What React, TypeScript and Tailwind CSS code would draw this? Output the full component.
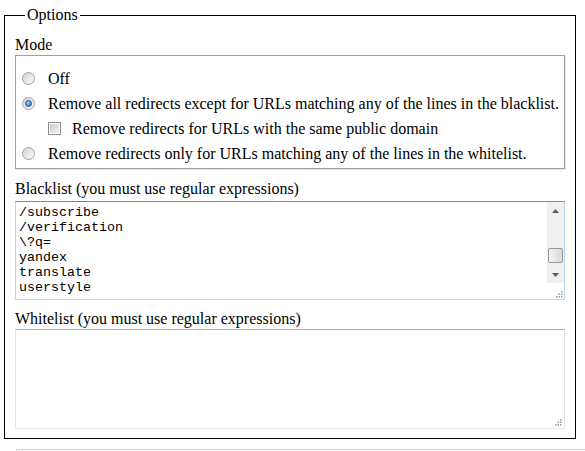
import React from 'react'

function Radio({ checked }: { checked?: boolean }) {
  return (
    <span className="flex h-[13px] w-[13px] shrink-0 items-center justify-center rounded-full border border-[#a2a2a2] bg-gradient-to-br from-[#d4d4d4] to-[#fafafa]">
      {checked && (
        <span className="h-[7px] w-[7px] rounded-full border border-[#1c4f8a] bg-[radial-gradient(circle_at_35%_35%,#8fd0f8,#2a6db5)]" />
      )}
    </span>
  )
}

function Checkbox() {
  return (
    <span className="flex h-[13px] w-[13px] shrink-0 items-center justify-center border border-[#8e8f8f] bg-white">
      <span className="h-[9px] w-[9px] bg-gradient-to-br from-[#cbcbcb] to-[#f4f4f4]" />
    </span>
  )
}

function Grip() {
  return (
    <svg width="7" height="7" viewBox="0 0 7 7">
      <rect x="5" y="0" width="1.5" height="1.5" fill="#9a9a9a" />
      <rect x="2.5" y="2.5" width="1.5" height="1.5" fill="#9a9a9a" />
      <rect x="5" y="2.5" width="1.5" height="1.5" fill="#9a9a9a" />
      <rect x="0" y="5" width="1.5" height="1.5" fill="#9a9a9a" />
      <rect x="2.5" y="5" width="1.5" height="1.5" fill="#9a9a9a" />
      <rect x="5" y="5" width="1.5" height="1.5" fill="#9a9a9a" />
    </svg>
  )
}

const blacklist = ['/subscribe', '/verification', '\\?q=', 'yandex', 'translate', 'userstyle'].join('\n')

export default function App() {
  return (
    <div className="min-h-[451px] w-[585px] overflow-hidden bg-white font-['Liberation_Serif','Times_New_Roman',serif] text-[16px] leading-[18px] text-black">
      <fieldset className="ml-[4px] mt-[6px] w-[572px] border border-black px-[10px] pb-[9px] font-['Liberation_Serif',serif]">
        <legend className="ml-[10px] px-[2px] font-['Liberation_Serif',serif] leading-[18px]">Options</legend>

        <div className="mt-[12px]">Mode</div>
        <div className="mt-[1px] h-[114px] border border-[#a0a0a0] pt-[10px] shadow-[1px_1px_0_#e4e4e4]">
          <label className="flex h-[25px] items-center pl-[6px]">
            <Radio />
            <span className="ml-[13px]">Off</span>
          </label>
          <label className="flex h-[25px] items-center pl-[6px]">
            <Radio checked />
            <span className="ml-[13px]">Remove all redirects except for URLs matching any of the lines in the blacklist.</span>
          </label>
          <label className="flex h-[25px] items-center pl-[32px]">
            <Checkbox />
            <span className="ml-[11px]">Remove redirects for URLs with the same public domain</span>
          </label>
          <label className="flex h-[25px] items-center pl-[6px]">
            <Radio />
            <span className="ml-[13px]">Remove redirects only for URLs matching any of the lines in the whitelist.</span>
          </label>
        </div>

        <div className="mt-[11px]">Blacklist (you must use regular expressions)</div>
        <div className="mt-[3px] flex h-[99px] border border-[#b9d7ee] border-t-[#5b93c4]">
          <textarea
            readOnly
            value={blacklist}
            className="h-full flex-1 resize-none overflow-hidden px-[3px] pt-[3px] font-['Liberation_Mono','Courier_New',monospace] text-[13.33px] leading-[15px] outline-none"
          />
          <div className="flex w-[17px] flex-col">
            <div className="flex h-[81px] flex-col bg-[#f0f0f0]">
              <div className="flex h-[17px] items-center justify-center">
                <svg width="7" height="4" viewBox="0 0 7 4"><polygon points="3.5,0 7,4 0,4" fill="#5a5a5a" /></svg>
              </div>
              <div className="h-[29px]" />
              <div className="mx-[1px] h-[15px] rounded-[2px] border border-[#979797] bg-gradient-to-r from-[#f4f4f4] to-[#d9d9d9]" />
              <div className="h-[3px]" />
              <div className="flex h-[17px] items-center justify-center">
                <svg width="7" height="4" viewBox="0 0 7 4"><polygon points="0,0 7,0 3.5,4" fill="#5a5a5a" /></svg>
              </div>
            </div>
            <div className="flex flex-1 items-end justify-end p-[1px]">
              <Grip />
            </div>
          </div>
        </div>

        <div className="mt-[10px]">Whitelist (you must use regular expressions)</div>
        <div className="relative mt-[1px] h-[100px] border border-[#e2e3ea] border-t-[#abadb3] border-b-[#e3e9ef]">
          <textarea readOnly className="h-full w-full resize-none overflow-hidden outline-none" />
          <div className="absolute bottom-[2px] right-[2px] flex">
            <Grip />
          </div>
        </div>
      </fieldset>

      <div className="ml-[16px] mt-[10px] h-[4px] border-l border-t border-[#d2d2d2]" />
    </div>
  )
}
